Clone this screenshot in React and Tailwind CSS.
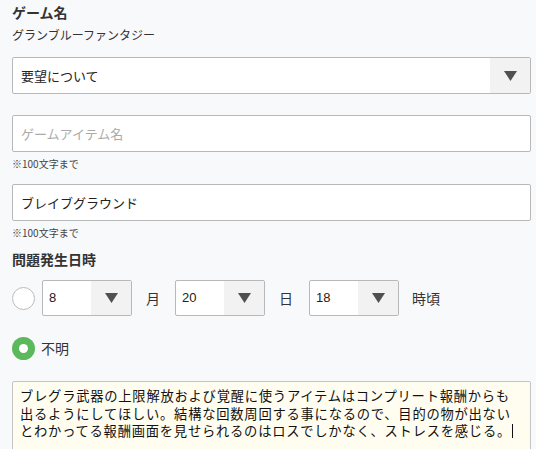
import React from "react";

const Arrow = () => (
  <svg width="13" height="10" viewBox="0 0 13 10">
    <polygon points="0,0 13,0 6.5,10" fill="#505050" />
  </svg>
);

const SmallSelect = ({ value }) => (
  <div className="flex h-[36px] w-[90px] rounded-[2px] border border-[#b8b8b8] bg-white overflow-hidden">
    <div className="flex flex-1 items-center pl-[6px] text-[13px] text-[#222] font-['Liberation_Sans',sans-serif]">{value}</div>
    <div className="flex w-[40px] items-center justify-center bg-[#f2f2f2]">
      <Arrow />
    </div>
  </div>
);

export default function App() {
  const jp = "font-['Noto_Sans_CJK_JP',sans-serif]";
  return (
    <div className={`min-h-[449px] w-[536px] overflow-hidden bg-[#f8f9fb] pl-[12px] pr-[5px] pt-[2px] ${jp} text-[#333]`}>
      <div className="text-[14px] font-bold leading-[20px] text-[#333]">ゲーム名</div>
      <div className="mt-[4px] text-[12px] leading-[18px] text-[#333]">グランブルーファンタジー</div>

      <div className="mt-[13px] flex h-[37px] rounded-[2px] border border-[#b8b8b8] bg-white overflow-hidden">
        <div className="flex flex-1 items-center pl-[8px] text-[13px] text-[#222]">要望について</div>
        <div className="flex w-[40px] items-center justify-center bg-[#f2f2f2]">
          <Arrow />
        </div>
      </div>

      <div className="mt-[21px] flex h-[37px] items-center rounded-[2px] border border-[#b8b8b8] bg-white pl-[8px] text-[13px] text-[#aaa]">
        ゲームアイテム名
      </div>
      <div className="mt-[5px] text-[10px] leading-[14px] text-[#444]">※100文字まで</div>

      <div className="mt-[13px] flex h-[37px] items-center rounded-[2px] border border-[#b8b8b8] bg-white pl-[8px] text-[13px] text-[#222]">
        ブレイブグラウンド
      </div>
      <div className="mt-[5px] text-[10px] leading-[14px] text-[#444]">※100文字まで</div>

      <div className="mt-[9px] text-[14px] font-bold leading-[20px] text-[#333]">問題発生日時</div>

      <div className="mt-[11px] flex items-center">
        <div className="h-[23px] w-[23px] rounded-full border border-[#bbb] bg-white" />
        <div className="ml-[7px]">
          <SmallSelect value="8" />
        </div>
        <div className="ml-[14px] mr-[15px] text-[14px] text-[#333]">月</div>
        <SmallSelect value="20" />
        <div className="ml-[14px] mr-[16px] text-[14px] text-[#333]">日</div>
        <SmallSelect value="18" />
        <div className="ml-[13px] text-[14px] text-[#333]">時頃</div>
      </div>

      <div className="mt-[21px] flex items-center">
        <div className="flex h-[23px] w-[23px] items-center justify-center rounded-full bg-[#5cb85c]">
          <div className="h-[9px] w-[9px] rounded-full bg-white" />
        </div>
        <div className="ml-[6px] text-[14px] text-[#333]">不明</div>
      </div>

      <div className="mt-[21px] h-[80px] rounded-[2px] border border-[#c4c4c4] bg-[#fffdf0] pl-[7px] pt-[5px] text-[13.3px] leading-[17.5px] tracking-[0.75px] whitespace-nowrap text-[#111]">
        <div>ブレグラ武器の上限解放および覚醒に使うアイテムはコンプリート報酬からも</div>
        <div>出るようにしてほしい。結構な回数周回する事になるので、目的の物が出ない</div>
        <div className="flex items-center">
          とわかってる報酬画面を見せられるのはロスでしかなく、ストレスを感じる。
          <span className="ml-[1px] inline-block h-[14px] w-[1px] bg-[#111]" />
        </div>
      </div>
    </div>
  );
}
